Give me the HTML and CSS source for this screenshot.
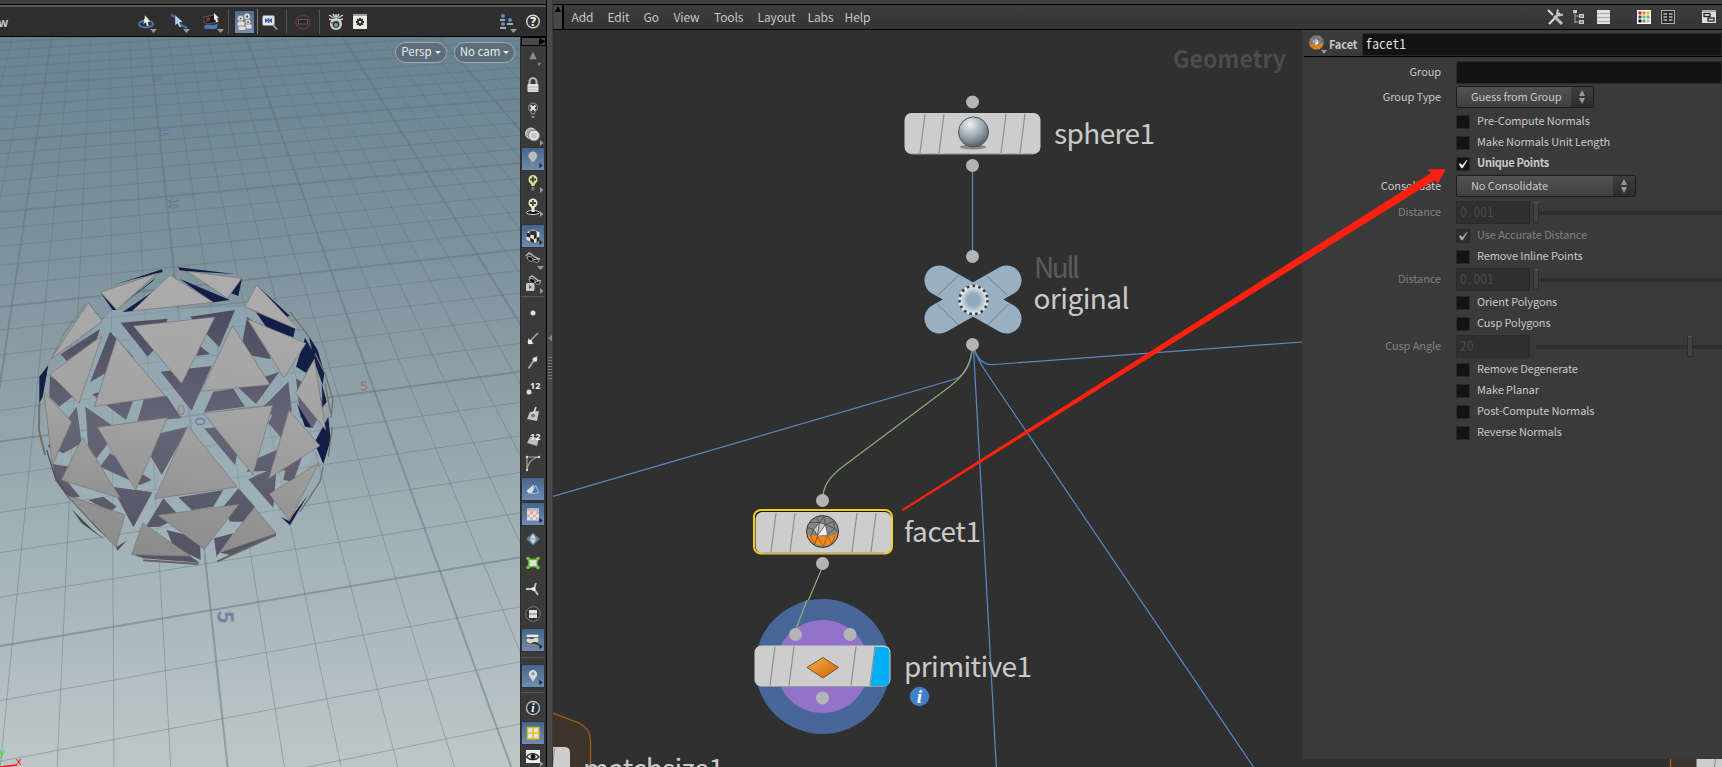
FILE: index.html
```html
<!DOCTYPE html>
<html lang="en">
<head>
<meta charset="utf-8">
<title>Scene and network editor</title>
<link rel="stylesheet" href="styles.css">
</head>
<body>
<div class="app">
  <section class="scene">
    <div class="strip"></div>
    <header class="scene-bar">
      <span class="bar-title">w</span>
      <div class="bar-tools">
        <svg class="t i1" viewBox="0 0 24 24"><ellipse cx="11" cy="14" rx="7" ry="3.5" fill="none" stroke="#4a76b4" stroke-width="2"/><path d="M10 5l6 7-3 0 1 4-2 .5-1.500-4-2.500 2z" fill="#eee" stroke="#333" stroke-width=".5"/><path d="M15 19h7l-3.500 4z" fill="#999"/></svg>
        <svg class="t i2" viewBox="0 0 24 24"><path d="M3 5l5 2 3 7 8 4" fill="none" stroke="#3e6db0" stroke-width="2.500"/><path d="M7 5l8 7-3.500.500 2 4-2 1-2-4-2.500 2z" fill="#bcd3ea" stroke="#345" stroke-width=".5"/><path d="M15 19h7l-3.500 4z" fill="#999"/></svg>
        <svg class="t i3" viewBox="0 0 24 24"><path d="M2 7l10-2 4 3v4l-11 2-3-2z" fill="#1b1b1b" stroke="#777" stroke-width=".7"/><path d="M4 8l4-1v4l-4 1z" fill="#703838"/><path d="M2 16c5-3 10 1 14-3l-1 5c-4 3-8 0-12 1z" fill="#4a76b4"/><path d="M12 3l5 5-2 0 1 4-2 0-1-3-1 1z" fill="#eee"/><path d="M15 19h7l-3.500 4z" fill="#999"/></svg>
        <i class="sep"></i>
        <span class="pressed"><svg viewBox="0 0 19 22"><g fill="#dededa" stroke="#6b6b6b" stroke-width=".7"><circle cx="5.500" cy="7.500" r="3.200"/><circle cx="12" cy="5.500" r="3.500"/><circle cx="13" cy="11" r="3"/><rect x="2" y="10" width="8" height="6" rx="2.500"/><rect x="10" y="13" width="7" height="5" rx="1"/><rect x="3" y="15" width="8" height="4.500" rx="1.500"/></g><circle cx="5.500" cy="7.500" r="1" fill="#555"/><circle cx="12" cy="5.500" r="1.200" fill="#555"/><circle cx="13" cy="11" r=".9" fill="#555"/></svg></span>
        <i class="sep s2"></i>
        <svg class="t i5" viewBox="0 0 24 24"><rect x="5.500" y="5.500" width="12" height="10" rx="1.500" fill="#dfe6ee" stroke="#888"/><path d="M8 8l2 1.500v2L8 13zM15 8l-2 1.500v2l2 1.500z" fill="#3568ac"/><path d="M9 10.500h5M11.500 8v5" stroke="#3568ac" stroke-width="1.600"/><path d="M16 15l4 4.500" stroke="#aaa" stroke-width="1.600"/></svg>
        <i class="sep"></i>
        <svg class="t i6" viewBox="0 0 24 24"><circle cx="12" cy="12" r="7" fill="none" stroke="#693333" stroke-width="1.600"/><rect x="7.500" y="9.500" width="9" height="4.500" fill="#252525" stroke="#5d5d5d"/></svg>
        <i class="sep"></i>
        <svg class="t i7" viewBox="0 0 24 24"><path d="M5 5l5 3M19 5l-5 3M12 4v4M5 9l4 1M19 9l-4 1M9 4l2 3M15 4l-2 3" stroke="#d2d2cb" stroke-width="1.400"/><circle cx="12" cy="14" r="6" fill="#cfcfc9"/><circle cx="12" cy="14.500" r="3.400" fill="#333"/><circle cx="12" cy="15" r="2" fill="#4ea6bd"/><circle cx="8" cy="13" r="1" fill="#d33"/></svg>
        <svg class="t i8" viewBox="0 0 24 24"><rect x="5" y="4" width="14" height="15" fill="#ecece8"/><path d="M5 5h14" stroke="#888" stroke-width="1.500"/><g stroke="#222" stroke-width="1.800"><path d="M12 8v8M8 12h8M9.200 9.200l5.600 5.600M14.800 9.200l-5.600 5.600"/></g><circle cx="12" cy="12" r="1.300" fill="#eee"/></svg>
        <svg class="t i9" viewBox="0 0 24 24"><g fill="#5d8bc8"><circle cx="7" cy="6" r="2"/><circle cx="7" cy="14" r="2"/><circle cx="14" cy="10" r="2"/></g><path d="M4 10h5M4 18h6M11 14h6" stroke="#cfd6de" stroke-width="1.600"/><path d="M14 19h7l-3.500 4z" fill="#999"/></svg>
        <svg class="t i10" viewBox="0 0 24 24"><circle cx="12" cy="11.500" r="6.300" fill="#303438" stroke="#d5d5d5" stroke-width="1.400"/><text x="12" y="16" class="glyph">?</text></svg>
      </div>
    </header>
    <div class="scene-body">
      <div class="viewport">
        <svg class="view3d" viewBox="0 37 520 730" width="520" height="730">
          <defs>
            <linearGradient id="sky" x1="0" y1="0" x2="0" y2="1"><stop offset="0" stop-color="#688490"/><stop offset=".3" stop-color="#7d939c"/><stop offset=".7" stop-color="#a2b2b8"/><stop offset="1" stop-color="#bec7c7"/></linearGradient>
            <linearGradient id="face" gradientUnits="userSpaceOnUse" x1="600" y1="100" x2="480" y2="950"><stop offset="0" stop-color="#acacac"/><stop offset=".5" stop-color="#a3a3a3"/><stop offset="1" stop-color="#8c8b8b"/></linearGradient>
            <linearGradient id="back" gradientUnits="userSpaceOnUse" x1="0" y1="200" x2="0" y2="900"><stop offset="0" stop-color="#4b4a5f"/><stop offset=".5" stop-color="#666576"/><stop offset="1" stop-color="#565566"/></linearGradient>
          </defs>
          <rect y="37" width="520" height="730" fill="url(#sky)"/>
          <g id="grid" fill="none"></g>
          <g class="axis-num">
            <text transform="translate(153 73) rotate(88) scale(.52 1)" font-size="11">-20</text>
            <text transform="translate(159 126) rotate(86) scale(.58 1)" font-size="12">-15</text>
            <text transform="translate(168 196) rotate(86) scale(.62 1)" font-size="14">-10</text>
            <text transform="translate(217.500 611) rotate(88)" font-size="22" font-weight="700">5</text>
            <text x="360" y="391" font-size="14" font-weight="700" class="red">5</text>
          </g>
          <g transform="translate(0 240) scale(.33333)">
            <polygon points="338,210 735,200 895,300 960,620 820,830 600,950 400,860 180,720 150,400" opacity=".35" fill="#a1b7bf"/>
            <g fill="url(#back)">
              <polygon points="362,248 503,236 480,310 443,350"/><polygon points="570,230 705,210 658,322"/><polygon points="482,395 635,378 575,512"/>
              <polygon points="742,230 720,340 812,358 800,280"/><polygon points="330,275 400,350 270,427"/><polygon points="276,463 380,430 400,480 378,540"/>
              <polygon points="432,478 500,468 545,535 412,543"/><polygon points="256,500 335,555 320,615 290,655 265,628"/><polygon points="640,455 700,446 735,500 612,516"/>
              <polygon points="712,440 838,395 768,492"/><polygon points="480,580 565,560 485,705 453,650"/><polygon points="612,565 690,560 720,600 705,675"/>
              <polygon points="335,740 457,757 400,862"/><polygon points="745,718 830,680 820,803"/><polygon points="865,425 790,500 860,570 875,510"/>
              <polygon points="888,415 945,450 975,490 938,565 900,530"/><polygon points="330,640 455,720 420,735 300,680"/><polygon points="437,862 490,775 540,830 480,860"/>
              <polygon points="535,772 670,750 640,800 575,810"/><polygon points="670,800 715,745 765,800 730,845 690,845"/><polygon points="150,408 230,460 178,500 148,470"/>
              <polygon points="142,620 230,500 245,610 190,640"/><polygon points="500,870 600,895 602,960 520,920"/><polygon points="642,895 700,880 660,935 650,950"/>
              <polygon points="600,318 630,342 590,348"/><polygon points="760,660 830,630 870,690 740,695"/><polygon points="182,343 300,267 290,298 200,363"/>
              <polygon points="158,672 210,680 190,710 240,770 205,775 165,720"/><polygon points="348,922 382,900 352,933"/><polygon points="265,780 310,770 350,800 330,815"/><polygon points="850,720 865,650 905,655 880,725"/><polygon points="400,944 570,948 600,968 430,955"/><polygon points="660,938 828,880 828,887 690,945"/>
              <polygon points="805,550 820,520 860,540 850,600"/><polygon points="380,760 410,750 450,757 400,800"/>
            </g>
            <g fill="#141d46">
              <polygon points="332,138 486,88 488,96 400,118"/><polygon points="535,82 705,102 560,94 538,90"/><polygon points="303,160 350,210 338,210"/><polygon points="352,206 467,113 458,124"/>
              <polygon points="368,216 463,152 400,213"/><polygon points="540,117 690,180 640,187 600,160"/><polygon points="726,115 715,168 693,160"/><polygon points="768,217 886,265 880,292 803,267"/>
              <polygon points="770,135 870,228 860,230"/><polygon points="915,293 948,350 918,398 888,380"/><polygon points="118,490 118,410 145,375 128,470"/><polygon points="943,608 985,530 992,600 970,672"/>
              <polygon points="870,856 842,830 866,842 924,764"/><polygon points="926,287 953,330 973,400 968,435 945,370"/><polygon points="265,187 300,235 290,233"/><polygon points="890,490 935,563 915,560"/><polygon points="965,430 980,485 968,500"/>
            </g>
            <g fill="none" stroke="#756f6a" stroke-width="4" stroke-linejoin="round">
              <path d="M118 490l-1 80 18 75" stroke-width="6"/><path d="M140 630l25 80 45 65 75 82 65 60" stroke="#4f5158"/><path d="M430 961l165 11M652 964l172-78" stroke="#68645f" stroke-width="6"/>
              <path d="M870 215l60 80M945 340l30 60 24 78-6 55M975 430l17 90M997 560l-12 90M970 680l-10 45-60 90"/>
              <path d="M153 358l42-82 60-82" stroke-width="2"/>
            </g>
            <path d="M215 808l60 58 40 34-70-50z" fill="#4c4b48"/>
            <g fill="url(#face)" stroke="#77726f" stroke-width="2">
              <polygon points="303,156 470,100 350,210"/><polygon points="397,213 510,105 640,187"/><polygon points="562,94 725,115 682,175"/><polygon points="770,135 735,200 900,272"/>
              <polygon points="265,188 307,243 153,358"/><polygon points="400,258 645,231 545,431"/><polygon points="305,288 150,402 237,490"/><polygon points="350,295 283,500 495,468"/>
              <polygon points="698,257 603,454 810,434"/><polygon points="742,237 918,310 852,413"/><polygon points="943,357 887,460 977,570"/><polygon points="132,457 215,545 157,675"/>
              <polygon points="292,562 502,533 407,750"/><polygon points="610,519 818,496 759,704"/><polygon points="867,511 960,617 806,716"/><polygon points="248,592 184,720 362,775"/>
              <polygon points="563,557 464,776 712,741"/><polygon points="957,668 808,762 868,843"/><polygon points="202,767 375,824 348,922"/><polygon points="428,849 395,944 572,948"/>
              <polygon points="473,826 717,793 613,928"/><polygon points="763,802 827,880 658,938"/>
            </g>
            <text x="531" y="525" font-size="46" fill="#a8807e" class="origin">0</text>
            <text transform="translate(584 532) rotate(90)" font-size="46" fill="#7478a0" class="origin">0</text>
          </g>
          <g class="gizmo"><path d="M0 767l17-2" stroke="#f01010" stroke-width="1.300"/><text x="-1" y="756" fill="#1ee61e">y</text><text x="16" y="765" fill="#f01010">x</text></g>
        </svg>
        <div class="pills"><span class="pill p1">Persp<b></b></span><span class="pill p2">No cam<b></b></span></div>
      </div>
      <aside class="side">
        <div class="side-head"><b></b></div>
        <svg class="c first" viewBox="0 0 24 24"><path d="M12 7l4.500 9h-9z" fill="#8a8a8a"/><path d="M18 20h4l-3 4h-1z" fill="#888"/></svg>
        <svg class="c g7" viewBox="0 0 24 24"><path d="M8.500 12V9a3.500 4 0 0 1 7 0v3" fill="none" stroke="#bbb" stroke-width="2"/><rect x="6.500" y="11" width="11" height="8" rx="1" fill="#e2e2da"/><path d="M7 14h10M7 17h10" stroke="#aaa" stroke-width=".8"/></svg>
        <svg class="c g2" viewBox="0 0 24 24"><path d="M10.500 15c0-3-3-3-3-6.500a4.500 4.500 0 0 1 9 0c0 3.500-3 3.500-3 6.500z" fill="#3b4146" stroke="#8b9296"/><path d="M9.500 6.500l5 5M14.500 6.500l-5 5" stroke="#eee" stroke-width="1.800"/><path d="M10.500 17h3v2h-3z" fill="#888"/></svg>
        <svg class="c" viewBox="0 0 24 24"><circle cx="10" cy="10.500" r="5.500" fill="#a9adac" stroke="#ddd"/><circle cx="13" cy="12.500" r="5.500" fill="#e2e2dc" stroke="#777"/><circle cx="13" cy="12.500" r="3" fill="#c2c5c3"/><path d="M19 17v6l3.500-3z" fill="#999"/></svg>
        <svg class="c on" viewBox="0 0 24 24"><path d="M10 15c0-3-3-3-3-6.500a4.800 4.800 0 0 1 9.600 0c0 3.500-2.800 3.500-2.800 6.500z" fill="#bdbdb8"/><path d="M10 16h3.500v3.500h-3.500z" fill="#888"/><path d="M19 16v6l3.500-3z" fill="#222"/></svg>
        <svg class="c" viewBox="0 0 24 24"><path d="M10.500 15c0-3-3-3-3-6.500a4.500 4.500 0 0 1 9 0c0 3.500-3 3.500-3 6.500z" fill="#dfe19b"/><path d="M12 5.500v6M9 8.500h6" stroke="#444" stroke-width="1.800"/><path d="M10.500 16h3v3.500h-3z" fill="#777"/><path d="M19 16v6l3.500-3z" fill="#999"/></svg>
        <svg class="c" viewBox="0 0 24 24"><ellipse cx="12" cy="17.500" rx="6.500" ry="2" fill="#111" stroke="#ddd"/><path d="M10.500 14c0-3-3-2-3-6a4.500 4.500 0 0 1 9 0c0 4-3 3-3 6v3h-3z" fill="#eee9c0"/><path d="M12 5v6M9 8h6" stroke="#444" stroke-width="1.800"/><path d="M19 16v6l3.500-3z" fill="#999"/></svg>
        <svg class="c on g5" viewBox="0 0 24 24"><path d="M5 8l7-3 7 3v8l-6 4-8-4z" fill="#e6e6e2"/><path d="M5 8l4 1.500v4.500l-4-1.500zM13 10.500l3-1v4.500l-3 1.500zM9 14l4 2v4l-4-2zM16 14l3-1v3.500l-3 2z" fill="#222"/><ellipse cx="12" cy="8.500" rx="4" ry="2.500" fill="#333"/><path d="M19 16v6l3.500-3z" fill="#222"/></svg>
        <svg class="c" viewBox="0 0 24 24"><path d="M5 8l3-3c2 0 6 6 11 6" fill="none" stroke="#bbb" stroke-width="1.400"/><path d="M6 9c3-1 6 0 6 3-1 3-5 1-6-3zM12.500 12c2-1 5-1 5.500 1-1 2-5 1.500-5.500-1z" fill="#111" stroke="#aaa"/><path d="M16 18h7l-3.500 4z" fill="#999"/></svg>
        <svg class="c" viewBox="0 0 24 24"><path d="M8 6l3-2c2 0 4 5 9 5" fill="none" stroke="#bbb" stroke-width="1.400"/><path d="M8 7c3-1 6 0 6 3-1 3-5 1-6-3zM14 10c2-1 5-1 5.500 1-1 2-5 1.500-5.500-1z" fill="#111" stroke="#aaa"/><rect x="5" y="11" width="8.500" height="8" rx="1.500" fill="#c9c9c4"/><path d="M8 13v4l3-2z" fill="#555"/><path d="M19 16v6l3.500-3z" fill="#999"/></svg>
        <i class="hr"></i>
        <svg class="c g4" viewBox="0 0 24 24"><circle cx="12" cy="12" r="2.500" fill="#deded8"/></svg>
        <svg class="c g2" viewBox="0 0 24 24"><path d="M10 13l7-7" stroke="#aaa" stroke-width="1.500"/><path d="M7 17v-6l6 6z" fill="#bbb"/><circle cx="9" cy="15" r="2.300" fill="#ecece6"/></svg>
        <svg class="c" viewBox="0 0 24 24"><path d="M7.500 17.500l6-9" stroke="#aaa" stroke-width="1.800"/><path d="M11 8l5.500-3-1 6z" fill="#bbb"/><circle cx="14" cy="8.500" r="2.300" fill="#e5e5e0"/></svg>
        <svg class="c g1" viewBox="0 0 24 24"><circle cx="8" cy="16" r="2.500" fill="#ddd"/><text x="9" y="13" class="num">12</text></svg>
        <svg class="c g2" viewBox="0 0 24 24"><path d="M9 10l9-1-2 10-10-2z" fill="#c8c8c2"/><path d="M12 13l3-8" stroke="#e5e5e0" stroke-width="1.500"/><circle cx="12" cy="13.500" r="2" fill="#777"/></svg>
        <svg class="c g1" viewBox="0 0 24 24"><path d="M9 10l9 1-2 8-10-3z" fill="#bfbfb9"/><text x="9" y="13" class="num">12</text></svg>
        <svg class="c" viewBox="0 0 24 24"><path d="M6 19V6h12M6 19C7 11 11 7 18 6" fill="none" stroke="#aaa" stroke-width="1.100"/><g fill="#ddd"><circle cx="6" cy="6" r="1.200"/><circle cx="18" cy="6" r="1.200"/><circle cx="6" cy="19" r="1.200"/></g></svg>
        <svg class="c on g2" viewBox="0 0 24 24"><path d="M5 14l8-7-1 9-5 1z" fill="#dddcd2"/><path d="M15 8l3 8-8 1z" fill="#3f74b9" stroke="#d8dde2" stroke-width=".8"/></svg>
        <svg class="c on g1" viewBox="0 0 24 24"><rect x="5.500" y="6" width="13" height="13" fill="#e9e6e2"/><path d="M5.500 6h3v3h-3zM12 6h3v3h-3zM8.500 9h3.500v3.500h-3.500zM15 9h3.500v3.500h-3.500zM5.500 12.500h3v3h-3zM12 12.500h3v3h-3z" fill="#e0aaa1"/><path d="M8.500 15.500h3.500v3.500h-3.500zM15 15.500h3.500v3.500h-3.500zM15 6h3.500v3h-3.500zM8.500 6h3v3h-3z" fill="#aebfdb"/><path d="M19 16v6l3.500-3z" fill="#222"/></svg>
        <svg class="c g1" viewBox="0 0 24 24"><path d="M12 5.500l7 6.500-7 6.500L5 12z" fill="#5680b5"/><path d="M12 7l3.500 5-3.500 5-3.500-5z" fill="#dad9cd"/><path d="M7 12h10" stroke="#8a8a7d"/></svg>
        <svg class="c" viewBox="0 0 24 24"><path d="M7 7.500q5 2 10 0-2 4.500 0 9-5-2-10 0 2-4.500 0-9z" fill="#e0e2d6" stroke="#63b93c" stroke-width="1.400"/><g fill="#6fc347"><circle cx="7" cy="7.500" r="1.800"/><circle cx="17" cy="7.500" r="1.800"/><circle cx="7" cy="16.500" r="1.800"/><circle cx="17" cy="16.500" r="1.800"/></g></svg>
        <svg class="c g2" viewBox="0 0 24 24"><path d="M5 12h8l2-6M13 12l4 6" fill="none" stroke="#c8c8c2" stroke-width="1.800"/><circle cx="12.500" cy="12" r="2" fill="#eee"/></svg>
        <svg class="c g1" viewBox="0 0 24 24"><circle cx="12" cy="12" r="7.300" fill="#333" stroke="#777"/><rect x="8" y="8" width="8" height="8" fill="#dededa"/><path d="M8 12h8" stroke="#888" stroke-width="1.200"/></svg>
        <svg class="c on g2" viewBox="0 0 24 24"><path d="M5 6h13v13H5z" fill="#34383c"/><path d="M5 6h13v3H5z" fill="#e9e9e2"/><path d="M5 11c3-3 5 2 8-1 2-1 4-1 5 1v4l-5-1-4 2-4-2z" fill="#d9d9d3"/><path d="M5 15l4 2 4-1 5 2v1H5z" fill="#8b8b84"/><path d="M19 16v6l3.500-3z" fill="#222"/></svg>
        <i class="hr g5"></i>
        <svg class="c on g6" viewBox="0 0 24 24"><path d="M12 19c-1-4-4.500-6-4.500-9a4.500 4.500 0 0 1 9 0c0 3-3.500 5-4.500 9z" fill="#dadad5"/><circle cx="12" cy="9.500" r="1.700" fill="#888"/><path d="M19 16v6l3.500-3z" fill="#222"/></svg>
        <i class="hr g4"></i>
        <svg class="c g3" viewBox="0 0 24 24"><circle cx="12" cy="12" r="6.500" fill="#263036" stroke="#c0c0c0" stroke-width="1.300"/><text x="12" y="16" class="glyph it">i</text></svg>
        <svg class="c on g1" viewBox="0 0 24 24"><rect x="6" y="6" width="12.500" height="12.500" fill="#e5e5df" stroke="#e0b816" stroke-width="1.500"/><path d="M12.200 6v12.500M6 12.200h12.500" stroke="#e0b816" stroke-width="1.500"/></svg>
        <svg class="c" viewBox="0 0 24 24"><path d="M5 5h14v13H5z" fill="#eee"/><path d="M5.500 12c3-4.500 9-4.500 12.500 0-3 3.500-9 3.500-12.500 0z" fill="#fff" stroke="#222" stroke-width="1.300"/><circle cx="12" cy="11.500" r="2.500" fill="#111"/><path d="M19 16v6l3.500-3z" fill="#999"/></svg>
      </aside>
    </div>
  </section>

  <div class="splitter"><i></i><b></b></div>

  <section class="network">
    <div class="strip"></div>
    <header class="menu-bar">
      <div class="collapse"><b></b></div>
      <nav class="menu"><span class="m1">Add</span><span class="m2">Edit</span><span class="m3">Go</span><span class="m4">View</span><span class="m5">Tools</span><span class="m6">Layout</span><span class="m7">Labs</span><span class="m8">Help</span></nav>
      <div class="menu-icons">
        <svg viewBox="0 0 18 18"><path d="M2 2l5 5M3 16L14 5" stroke="#d7d7d2" stroke-width="2.200"/><path d="M12 1.500l-1 4 2.500 2 3.500-1" fill="none" stroke="#c5c5c0" stroke-width="2"/><path d="M8 8l8 8" stroke="#bbb" stroke-width="3"/></svg>
        <svg viewBox="0 0 18 18"><path d="M5 3v12M5 8h6M5 14h6" fill="none" stroke="#aaa"/><path d="M3 2h4v3H3zM9 6h5v4H9zM9 12h5v4H9z" fill="#c8c8c4"/><path d="M10 8h3M10 14h3" stroke="#555"/></svg>
        <svg viewBox="0 0 18 18"><path d="M3 2h13v14H3z" fill="#e8e8e2"/><path d="M3 5.500h13M3 9.500h13M3 13.500h13" stroke="#b2b2ac" stroke-width="1.500"/></svg>
        <svg class="gap" viewBox="0 0 18 18"><path d="M2 2h14v14H2z" fill="#fff"/><path d="M3.500 3.500h3v3h-3z" fill="#d01818"/><path d="M7.500 3.500h3v3h-3z" fill="#ec7711"/><path d="M11.500 3.500h3v3h-3z" fill="#e4c300"/><path d="M3.500 7.500h3v3h-3z" fill="#28498f"/><path d="M7.500 7.500h3v3h-3z" fill="#66c41c"/><path d="M11.500 7.500h3v3h-3z" fill="#6a97cc"/><path d="M3.500 11.500h3v3h-3z" fill="#111"/><path d="M7.500 11.500h3v3h-3z" fill="#848478"/><path d="M11.500 11.500h3v3h-3z" fill="#bbb9a5"/></svg>
        <svg viewBox="0 0 18 18"><rect x="2.500" y="2.500" width="13" height="13" fill="#2b2b2b" stroke="#aaa"/><path d="M4.500 6h3.500M10 6h3.500M4.500 9h3.500M10 9h3.500M4.500 12h3.500M10 12h3.500" stroke="#bbb" stroke-width="1.500"/></svg>
        <svg class="gap" viewBox="0 0 18 18"><path d="M2 2h14v13H2z" fill="#deded9"/><path d="M2 3h14" stroke="#777"/><rect x="4" y="5.500" width="6" height="3" fill="#ddd" stroke="#222" stroke-width="1.300"/><rect x="8" y="10" width="6" height="3" fill="#ddd" stroke="#222" stroke-width="1.300"/></svg>
      </div>
    </header>
    <div class="canvas">
      <svg class="graph" viewBox="553 30 1169 737" width="1169" height="737">
        <defs>
          <radialGradient id="ball" cx=".38" cy=".25" r=".8"><stop offset="0" stop-color="#eef0f1"/><stop offset=".5" stop-color="#a2abb2"/><stop offset="1" stop-color="#4b5963"/></radialGradient>
          <radialGradient id="ring"><stop offset=".4" stop-color="#8fa9bd"/><stop offset=".9" stop-color="#e4e8ec"/></radialGradient>
          <linearGradient id="orange" x1="0" x2="1" y2="1"><stop offset="0" stop-color="#f6ae50"/><stop offset="1" stop-color="#cf6200"/></linearGradient>
          <g id="tile"><rect width="136" height="41" rx="7" fill="#cdcdcd"/><path d="M7 41h122" stroke="#999"/><path d="M20.500 1l-5 39M39.500 1l-5 39M101.500 1l-5 39M120.500 1l-5 39" stroke="#8e8e8e" stroke-width="1.200"/></g>
          <g id="facetball"><circle r="16" fill="#858585"/><path d="M-15.500 2A16 16 0 0 0 15.500 2C8 6-8 6-15.500 2z" fill="#ef8a1c"/><path d="M-3-9L3-7 5 3-5 4-9-2z" fill="#c4c4c4"/><path d="M3-7L5 3-5 4z" fill="#f0f0f0"/><path d="M-12-9L-3-9 3-7 11-10M-3-9L-9-2-15-4M-9-2L-5 4 3-7M3-7L5 3 12-3 3-7M12-3L15 1M-9-2L-12 5M-3-9L-5 4M-3-9L1-15 3-7M-3-9L-6-14M11-10L12-3" stroke="#484848" fill="none" stroke-width=".8"/><path d="M-5 5L-8 13M-5 5L1 15 5 4M5 4L9 12 13 4M-12 4L-8 13-5 5" stroke="#9a5510" fill="none" stroke-width=".8"/><circle r="16" fill="none" stroke="#38332d"/></g>
        </defs>
        <text class="ctx" x="1173" y="68" textLength="113" lengthAdjust="spacingAndGlyphs">Geometry</text>
        <path d="M553 713l28 11c7 3 9 18 9 43h-37z" fill="#3d342b"/><path d="M553 713l26 10c8 4 11.500 10 11.500 18v26" fill="none" stroke="#a9620f" stroke-width="1.300"/>
        <path d="M553 747h12q5 0 5 6v14h-17z" fill="#cdcdcd"/><path d="M554.500 748l-2 19" stroke="#888"/>
        <rect x="1670" y="750" width="30" height="20" fill="#3d342b"/><path d="M1670.500 750v20" stroke="#b3670e" stroke-width="1.300"/><rect x="1696.500" y="750" width="26" height="20" fill="#cdcdcd"/><path d="M1715.500 759l-1 8" stroke="#888"/>
        <g class="wire">
          <path d="M972.500 166v90"/><path d="M973 346c3 12 11 20 21 18.500L1302 342"/><path d="M973.500 348l22.800 419"/><path d="M974 348c2 8 6 15 12 24L1253.500 767"/><path d="M972 348c-1 18-8 29-20 32L553 496.500"/>
        </g>
        <g class="wire green"><path d="M972.500 348c-2 16-8 27-22 38L841 468c-14 11-18 20-18.500 32M822 568l-26 62"/></g>
        <g class="dot"><circle cx="972.500" cy="102" r="6.500"/><circle cx="972.500" cy="165.500" r="6.500"/><circle cx="972.500" cy="256.500" r="6.500"/><circle cx="972.500" cy="344.500" r="6.500"/><circle cx="822.500" cy="500.500" r="6.500"/><circle cx="822.500" cy="563.500" r="6.500"/></g>
        <use href="#tile" x="904.500" y="113"/>
        <ellipse cx="973" cy="147" rx="13" ry="2.500" fill="#888"/><circle cx="973.500" cy="132" r="15" fill="url(#ball)" stroke="#46525b"/>
        <g stroke="#99b0c3" stroke-width="30" stroke-linecap="round"><path d="M939.500 280.500l67 38M1006.500 280.500l-67 38"/></g>
        <path d="M958.500 275.500l-21 20M986.500 275.500l21 20M958.500 325l-21-21M987.500 325l21-21" stroke="#667f90"/>
        <circle cx="973.500" cy="300" r="15" fill="url(#ring)"/><circle cx="973.500" cy="300" r="14" fill="none" stroke="#3b3d43" stroke-width="2.500" stroke-dasharray="2.700 3.160"/>
        <rect x="754" y="510" width="138" height="43.500" rx="7" fill="#111" stroke="#f8cd10" stroke-width="2"/>
        <use href="#tile" x="755.500" y="512"/>
        <use href="#facetball" x="822.500" y="531.500"/>
        <circle cx="822.500" cy="666.500" r="67.500" fill="#466798"/><circle cx="822.500" cy="666.500" r="46.500" fill="#9373ca"/>
        <path d="M807 600l-11 29" stroke="#94b076" fill="none" stroke-width="1.200"/>
        <g class="dot"><circle cx="795.500" cy="634.500" r="6.500"/><circle cx="850" cy="634.500" r="6.500"/><circle cx="822.500" cy="698" r="6.500"/></g>
        <use href="#tile" x="754.500" y="645.500"/><path d="M875.500 647h8q6 0 6 6v27q0 6-6 6h-13z" fill="#00aef5"/>
        <path d="M807 667.500l16-10 15.500 10-15.500 10.500z" fill="url(#orange)" stroke="#7c5128"/>
        <circle cx="919.500" cy="696.500" r="9.700" fill="#427fcb"/><text class="info" x="919.500" y="703">i</text>
        <g class="name">
          <text x="1054" y="144" textLength="101">sphere1</text><text x="1034" y="278" textLength="46" fill="#5c5c5c">Null</text><text x="1033.500" y="309" textLength="96">original</text>
          <text x="904" y="542" textLength="77">facet1</text><text x="904" y="677" textLength="128">primitive1</text><text x="583" y="779" textLength="141">matchsize1</text>
        </g>
      </svg>
      <aside class="params">
        <header class="p-head"><svg class="p-icon" viewBox="-18 -18 36 36"><use href="#facetball"/></svg><b class="caret"></b><strong>Facet</strong><span class="p-name">facet1</span></header>
        <div class="row f"><label>Group</label><span class="input wide"></span></div>
        <div class="row s g2"><label>Group Type</label><span class="select">Guess from Group<i><b class="up"></b><b class="down"></b></i></span></div>
        <div class="row k g3"><span class="box"></span><span>Pre-Compute Normals</span></div>
        <div class="row k"><span class="box"></span><span>Make Normals Unit Length</span></div>
        <div class="row k bold"><span class="box"><svg viewBox="0 0 14 14"><path d="M1.500 7l2-1 2 2.500L11 2l.500.800L6 12H4.500z" fill="#eee"/></svg></span><span>Unique Points</span></div>
        <div class="row s g1"><label>Consolidate</label><span class="select big">No Consolidate<i><b class="up"></b><b class="down"></b></i></span></div>
        <div class="row f off g4"><label>Distance</label><span class="input num-in">0.001</span><span class="slider"><b></b></span></div>
        <div class="row k off g1"><span class="box"><svg viewBox="0 0 14 14"><path d="M1.500 7l2-1 2 2.500L11 2l.500.800L6 12H4.500z" fill="#aaa"/></svg></span><span>Use Accurate Distance</span></div>
        <div class="row k"><span class="box"></span><span>Remove Inline Points</span></div>
        <div class="row f off g1"><label>Distance</label><span class="input num-in">0.001</span><span class="slider"><b></b></span></div>
        <div class="row k g1"><span class="box"></span><span>Orient Polygons</span></div>
        <div class="row k"><span class="box"></span><span>Cusp Polygons</span></div>
        <div class="row f off g1"><label>Cusp Angle</label><span class="input num-in">20</span><span class="slider mid"><b></b></span></div>
        <div class="row k g1"><span class="box"></span><span>Remove Degenerate</span></div>
        <div class="row k"><span class="box"></span><span>Make Planar</span></div>
        <div class="row k"><span class="box"></span><span>Post-Compute Normals</span></div>
        <div class="row k"><span class="box"></span><span>Reverse Normals</span></div>
      </aside>
      <svg class="arrow" viewBox="553 30 1169 737" width="1169" height="737"><polygon points="901.500,509.500 1431,173 1427.500,169.500 1446,169 1437.500,184 1435,180 902.500,511.300" fill="#ff2010"/></svg>
    </div>
  </section>
</div>
<script src="grid.js"></script>
</body>
</html>
```

FILE: styles.css
```css
* { box-sizing: border-box; }
body { margin: 0; background: #303030; overflow: hidden; font-family: "Noto Sans CJK SC", "Noto Sans", sans-serif; font-size: 12px; color: #c8c8c8; }
svg { display: block; flex: none; }
.app { display: flex; width: 1722px; height: 767px; overflow: hidden; }
.scene { width: 547px; flex: none; display: flex; flex-direction: column; border-right: 1px solid #000; background: #3a3a3a; }
.strip { height: 5px; flex: none; background: #404040; border-bottom: 1px solid #000; }
.scene-bar { height: 32px; flex: none; display: flex; align-items: center; background: #2e2e2e; border-top: 2px solid #5a5a5a; border-bottom: 1px solid #000; }
.bar-title { width: 134px; margin-left: -2px; font-weight: 700; line-height: 28px; }
.bar-tools { display: flex; align-items: center; height: 100%; flex: 1; }
.t { width: 24px; height: 24px; }
.i1 { margin-left: 3px; } .i2 { margin-left: 9px; } .i3 { margin-left: 10px; margin-right: 2px; }
.sep { width: 1px; height: 25px; background: #555; }
.s2 { margin-left: 2px; background: #777; }
.pressed { width: 21px; height: 24px; margin-left: 5px; background: linear-gradient(#506d91, #7290b2); border: 1px solid #222c3a; }
.pressed svg { width: 19px; height: 22px; }
.i5 { margin: 0 5px 0 -1px; } .i6 { margin: 0 4px; } .i7 { margin-left: 4px; } .i9 { margin-left: auto; } .i10 { margin: 0 1px; }
.glyph { font: 700 12px "Noto Sans", sans-serif; fill: #fff; text-anchor: middle; }
.it { font: italic 700 12px "Liberation Serif", serif; }
.scene-body { flex: 1; display: flex; min-height: 0; }
.viewport { position: relative; width: 520px; overflow: hidden; }
.axis-num text { font-family: "Noto Sans CJK SC", sans-serif; font-weight: 700; fill: #64709a; fill-opacity: .75; }
.axis-num .red { fill: #a5736f; }
.origin { font-family: "Liberation Sans", sans-serif; }
.gizmo text { font: 11px "Liberation Sans", sans-serif; }
.pills { position: absolute; top: 5px; right: 5px; display: flex; gap: 7px; }
.pill { height: 21px; border: 1.5px solid #9dabb2; border-radius: 11px; background: #5c6f79; color: #e5e9ec; font-size: 11.500px; line-height: 15px; padding-bottom: 2px; display: flex; align-items: center; justify-content: center; gap: 3px; white-space: nowrap; }
.p1 { width: 52px; } .p2 { width: 61px; }
.pill b { border: 3.500px solid transparent; border-top-color: #e5e9ec; border-bottom: 0; margin-top: 2px; }
.side { width: 26px; display: flex; flex-direction: column; overflow: hidden; border-left: 1px solid #2a2a2a; background: #3a3a3a; }
.side-head { height: 9px; flex: none; background: #4a4a4a; border: 1px solid #000; display: flex; justify-content: flex-end; }
.side-head b { border: 3.500px solid transparent; border-left: 6px solid #000; border-right: 0; }
.c { width: 24px; height: 24px; }
.first { height: 20px; overflow: visible; }
.on { background: linear-gradient(#46658a, #6f8cae); border: 1px solid #2c3440; }
.hr { height: 1px; flex: none; background: #585858; margin-right: 2px; }
.g1 { margin-top: 1px; } .g2 { margin-top: 2px; } .g3 { margin-top: 3px; } .g4 { margin-top: 4px; } .g5 { margin-top: 5px; } .g6 { margin-top: 6px; } .g7 { margin-top: 7px; }
.num { font: 700 9px "Noto Sans", sans-serif; fill: #eee; }
.splitter { width: 6px; flex: none; background: #4a4a4a; border-right: 1px solid #3a3a3a; display: flex; flex-direction: column; align-items: center; }
.splitter i { margin-top: 335px; border: 3px solid transparent; border-right: 4px solid #888; border-left: 0; }
.splitter b { margin-top: 16px; width: 4px; height: 22px; background: repeating-linear-gradient(#777 0 1px, #444 1px 3px); }
.network { flex: 1; min-width: 0; display: flex; flex-direction: column; }
.menu-bar { height: 25px; flex: none; display: flex; align-items: center; background: linear-gradient(#3c3c3c, #353535); border-bottom: 1px solid #000; }
.collapse { width: 10px; height: 100%; margin-left: 1px; background: #484848; border-right: 2px solid #000; }
.collapse b { display: block; margin: 1px 0 0 1px; width: 0; border: 3px solid transparent; border-bottom: 6px solid #000; border-top: 0; }
.menu { display: flex; line-height: 24px; color: #c6c6c6; letter-spacing: -.1px; }
.menu span { white-space: nowrap; }
.m1 { width: 36px; margin-left: 7.500px; } .m2 { width: 36px; } .m3 { width: 30px; } .m4 { width: 40.500px; } .m5 { width: 43.500px; } .m6 { width: 50px; } .m7 { width: 37px; }
.menu-icons { margin-left: auto; margin-right: 4px; display: flex; gap: 6px; }
.menu-icons svg { width: 18px; height: 18px; }
.menu-icons .gap { margin-left: 17px; }
.canvas { position: relative; flex: 1; background: #303030; }
.graph { position: absolute; inset: 0; }
.ctx { font-size: 24px; font-weight: 700; fill: #4c4c4c; }
.name { font-size: 28px; fill: #cacaca; }
.wire { fill: none; stroke: #5c88c4; stroke-width: 1.2; }
.green { stroke: #8fae74; }
.dot { fill: #b4b4b4; }
.info { font: italic 700 19px "Liberation Serif", serif; fill: #fff; text-anchor: middle; }
.params { position: absolute; left: 749px; top: 0; width: 420px; height: 729px; background: #3a3a3a; overflow: hidden; font-size: 11px; letter-spacing: -.1px; }
.p-head { display: flex; align-items: center; height: 27px; margin: 0 0 4px 2px; padding-top: 2px; border-bottom: 1px solid #000; }
.p-icon { width: 17px; height: 17px; margin: -3px 0 0 4px; }
.caret { border: 3px solid transparent; border-top: 4px solid #999; border-bottom: 0; margin: 15px 0 0 -4px; }
.p-head strong { width: 32.500px; margin-left: 2px; line-height: 20px; }
.p-name { flex: 1; height: 23px; background: #131313; border: 1px solid #2a2a2a; padding-left: 3px; font: 13.500px/19px "Noto Sans Mono CJK SC", "DejaVu Sans Mono", monospace; letter-spacing: 0; color: #ddd; }
.row { display: flex; }
.row label { width: 139px; margin-right: 15px; text-align: right; line-height: 21px; white-space: nowrap; }
.f { height: 23px; } .s { height: 22px; }
.input { background: #131313; border: 1px solid #2a2a2a; }
.wide { flex: 1; }
.num-in { width: 74px; padding-left: 3px; font: 13.500px/19px "Noto Sans Mono CJK SC", "DejaVu Sans Mono", monospace; letter-spacing: 0; }
.off { color: #808080; }
.off .input { background: #2f2f2f; border-color: #2a2a2a; color: #4a4a4a; }
.select { width: 138px; padding-left: 14px; line-height: 19px; background: linear-gradient(#525252, #404040); border: 1px solid #1c1c1c; border-radius: 2px; display: flex; justify-content: space-between; white-space: nowrap; }
.big { width: 180px; }
.select i { width: 22px; background: linear-gradient(#3e3e3e, #2c2c2c); display: flex; flex-direction: column; align-items: center; justify-content: center; gap: 2px; }
.select .up { border: 3.500px solid transparent; border-bottom: 6px solid #999; border-top: 0; }
.select .down { border: 3.500px solid transparent; border-top: 6px solid #999; border-bottom: 0; }
.k { height: 21px; padding-left: 154px; gap: 7px; line-height: 19px; }
.box { width: 14px; height: 14px; margin-top: 4px; background: #131313; border: 1px solid #292929; }
.box svg { width: 13px; height: 12px; }
.off .box { background: #2e2e2e; }
.bold { font-weight: 700; letter-spacing: -.3px; }
.slider { flex: 1; height: 21px; margin: 1px 0 0 3px; background: linear-gradient(#2c2c2c, #303030) 3px 9px / 100% 4px no-repeat; }
.slider b { display: block; width: 6px; height: 21px; background: #424242; border: 1px solid #2c2c2c; border-top-color: #555; }
.mid b { margin-left: 154px; }
.arrow { position: absolute; inset: 0; pointer-events: none; }
```

FILE: grid.js
```js
// Ground plane: fits a projection to known grid intersections, then draws the lines.
const anchors = [
  [0, -10, 165, 197], [5, -10, 299, 184], [-5, -10, 26, 209], [10, -10, 425, 172],
  [0, -15, 158, 129], [5, -15, 277.5, 118], [-5, -15, 36, 137], [10, -15, 387, 109],
  [0, 5, 212, 609], [5, 5, 440, 573], [0, 0, 190, 415], [0, -5, 176, 288], [0, -20, 153, 77], [5, -20, 258, 67]
];
const A = Array.from({ length: 8 }, () => new Array(9).fill(0));
function addEquation(row, value) {
  for (let i = 0; i < 8; i++) {
    for (let j = 0; j < 8; j++) A[i][j] += row[i] * row[j];
    A[i][8] += row[i] * value;
  }
}
for (const [gx, gz, sx, sy] of anchors) {
  const x = gx / 10, z = gz / 10, u = sx / 400, v = sy / 400;
  addEquation([x, z, 1, 0, 0, 0, -x * u, -z * u], u);
  addEquation([0, 0, 0, x, z, 1, -x * v, -z * v], v);
}
for (let i = 0; i < 8; i++) {
  let p = i;
  for (let r = i + 1; r < 8; r++) if (Math.abs(A[r][i]) > Math.abs(A[p][i])) p = r;
  [A[i], A[p]] = [A[p], A[i]];
  for (let r = 0; r < 8; r++) {
    if (r === i) continue;
    const k = A[r][i] / A[i][i];
    for (let c = i; c < 9; c++) A[r][c] -= k * A[i][c];
  }
}
const h = A.map((row, i) => row[8] / row[i]);
function project(gx, gz) {
  const x = gx / 10, z = gz / 10, w = h[6] * x + h[7] * z + 1;
  return [400 * (h[0] * x + h[1] * z + h[2]) / w, 400 * (h[3] * x + h[4] * z + h[5]) / w];
}
const grid = document.getElementById('grid');
function line(a, b, major) {
  const el = document.createElementNS('http://www.w3.org/2000/svg', 'path');
  el.setAttribute('d', `M${project(...a)}L${project(...b)}`);
  el.setAttribute('stroke', major ? '#63717d' : '#616f79');
  el.setAttribute('stroke-opacity', major ? 0.48 : 0.4);
  el.setAttribute('stroke-width', major ? 2 : 1);
  grid.appendChild(el);
}
for (let x = -15; x <= 30; x++) line([x, -35], [x, 11], x % 5 === 0);
for (let z = -35; z <= 11; z++) line([-15, z], [30, z], z % 5 === 0);
```
